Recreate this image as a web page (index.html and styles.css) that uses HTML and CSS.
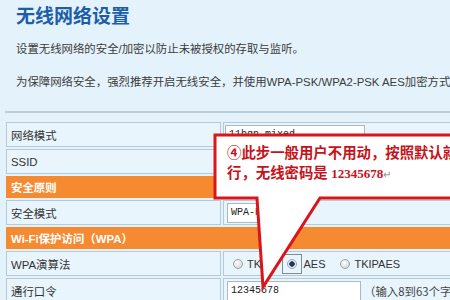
FILE: index.html
```html
<!DOCTYPE html>
<html>
	<head>
		<meta charset="UTF-8">
		<title>无线网络设置</title>
		<link rel="stylesheet" href="styles.css">
	</head>
	<body>
		<div class="page">
			<h1 class="title">无线网络设置</h1>
			<p class="intro first">设置无线网络的安全/加密以防止未被授权的存取与监听。</p>
			<p class="intro">为保障网络安全，强烈推荐开启无线安全，并使用WPA-PSK/WPA2-PSK AES加密方式。</p>
			<div class="rule"></div>

			<table class="form">
				<colgroup>
					<col class="col-label">
					<col class="col-value">
				</colgroup>
				<tr class="row">
					<td class="label">网络模式</td>
					<td class="value"><span class="select">11bgn mixed</span></td>
				</tr>
				<tr class="row">
					<td class="label">SSID</td>
					<td class="value"><span class="field">TP-LINK_WIFI</span></td>
				</tr>
				<tr class="head">
					<td colspan="2">安全原则</td>
				</tr>
				<tr class="row">
					<td class="label">安全模式</td>
					<td class="value"><span class="field mode">WPA-PSK/WPA2-PSK</span></td>
				</tr>
				<tr class="head">
					<td colspan="2">Wi-Fi保护访问（WPA）</td>
				</tr>
				<tr class="row">
					<td class="label">WPA演算法</td>
					<td class="value">
						<div class="radios">
							<span class="radio first"></span><span class="opt">TKIP</span>
							<span class="focus"><span class="radio on"></span></span><span class="opt aes">AES</span>
							<span class="radio third"></span><span class="opt">TKIPAES</span>
						</div>
					</td>
				</tr>
				<tr class="row">
					<td class="label">通行口令</td>
					<td class="value"><span class="field">12345678</span><span class="hint">（输入8到63个字符）</span></td>
				</tr>
			</table>

			<!-- callout drawn over the form -->
			<div class="callout">
				<svg class="bubble" width="260" height="162" viewBox="0 0 260 162">
					<path d="M2,2 H258 V65 H107 L50,154 L44,65 H2 Z" fill="#ffffff" stroke="#d8161c" stroke-width="3" stroke-linejoin="miter"/>
				</svg>
				<p class="callout-text">④此步一般用户不用动，按照默认就<br>行，无线密码是 <span class="num">12345678</span><span class="ret">↵</span></p>
			</div>
		</div>
	</body>
</html>
```

FILE: styles.css
```css
html, body {
	margin: 0;
	overflow: hidden;
}

body {
	background-color: #e4f3fb;
	font-family: "Noto Sans CJK SC", "Liberation Sans", sans-serif;
	color: #333;
}

.page {
	position: relative;
	width: 450px;
	height: 300px;
}

.title {
	margin: 3px 0 0 16px;
	font-size: 19px;
	line-height: 24px;
	font-weight: bold;
	color: #1d5ea8;
}

.intro {
	margin: 17px 0 0 16px;
	font-family: "Liberation Sans", "Noto Sans CJK SC", sans-serif;
	font-size: 11.4px;
	line-height: 16px;
	color: #3c3c3c;
	white-space: nowrap;
}

.intro.first {
	margin-top: 14px;
}

.rule {
	margin: 21px 0 0 5px;
	height: 2px;
	background-color: #bccbd6;
}

.form {
	margin: 7px 0 0 4px;
	width: 470px;
	table-layout: fixed;
	border-collapse: separate;
	border-spacing: 2px;
	font-size: 11.4px;
}

.col-label {
	width: 215px;
}

.col-value {
	width: 249px;
}

.form td {
	border: 1px solid #b7c9d4;
	padding: 0 4px;
	white-space: nowrap;
	overflow: hidden;
}

.row {
	height: 25px;
}

.label {
	color: #333;
	font-family: "Liberation Sans", "Noto Sans CJK SC", sans-serif;
	background-color: #e8f5fc;
}

.value {
	padding-left: 3px !important;
	background-color: #e8f5fc;
}

.head {
	height: 22px;
}

.head td {
	background-color: #f68a30;
	border-color: #f68a30;
	color: #fff;
	font-weight: bold;
	font-family: "Liberation Sans", "Noto Sans CJK SC", sans-serif;
}

.select, .field {
	display: inline-block;
	vertical-align: middle;
	height: 18px;
	line-height: 18px;
	padding: 0 3px;
	background: #fff;
	border: 1px solid #a9bac6;
	font-family: "Liberation Mono", monospace;
	font-size: 10px;
	color: #222;
	overflow: hidden;
}

.select {
	width: 132px;
	margin-left: -2px;
	line-height: 17px;
}

.field {
	width: 126px;
}

.field.mode {
	width: 60px;
}

.radios {
	display: flex;
	align-items: center;
	font-family: "Liberation Sans", sans-serif;
	font-size: 11px;
	color: #333;
}

.radio {
	display: inline-block;
	width: 8px;
	height: 8px;
	border-radius: 50%;
	border: 1px solid #9ca4ab;
	background: radial-gradient(circle at 40% 35%, #ffffff, #c9cdd1);
}

.radio.first {
	margin-left: 6px;
}

.radio.on {
	background: radial-gradient(circle, #1d3d6e 0 2.5px, #eef2f6 3px);
}

.radio.third {
	margin-left: 15px;
}

.opt {
	margin-left: 4px;
}

.focus {
	display: inline-flex;
	margin-left: 11px;
	padding: 4px;
	border: 1px solid #7d8c98;
}

.opt.aes {
	margin-left: 1px;
}

.hint {
	margin-left: 3px;
	vertical-align: middle;
	font-size: 11.4px;
	color: #444;
}

.callout {
	position: absolute;
	left: 213px;
	top: 130px;
	width: 260px;
	height: 162px;
}

.bubble {
	position: absolute;
	left: 0;
	top: 0;
}

.callout-text {
	position: relative;
	margin: 10px 0 0 14px;
	font-family: "Liberation Serif", "Noto Sans CJK SC", serif;
	font-size: 14.4px;
	line-height: 20px;
	font-weight: bold;
	color: #c8121a;
	white-space: nowrap;
}

.num {
	font-size: 13px;
}

.ret {
	font-weight: normal;
	font-size: 10px;
	color: #888;
}
```
